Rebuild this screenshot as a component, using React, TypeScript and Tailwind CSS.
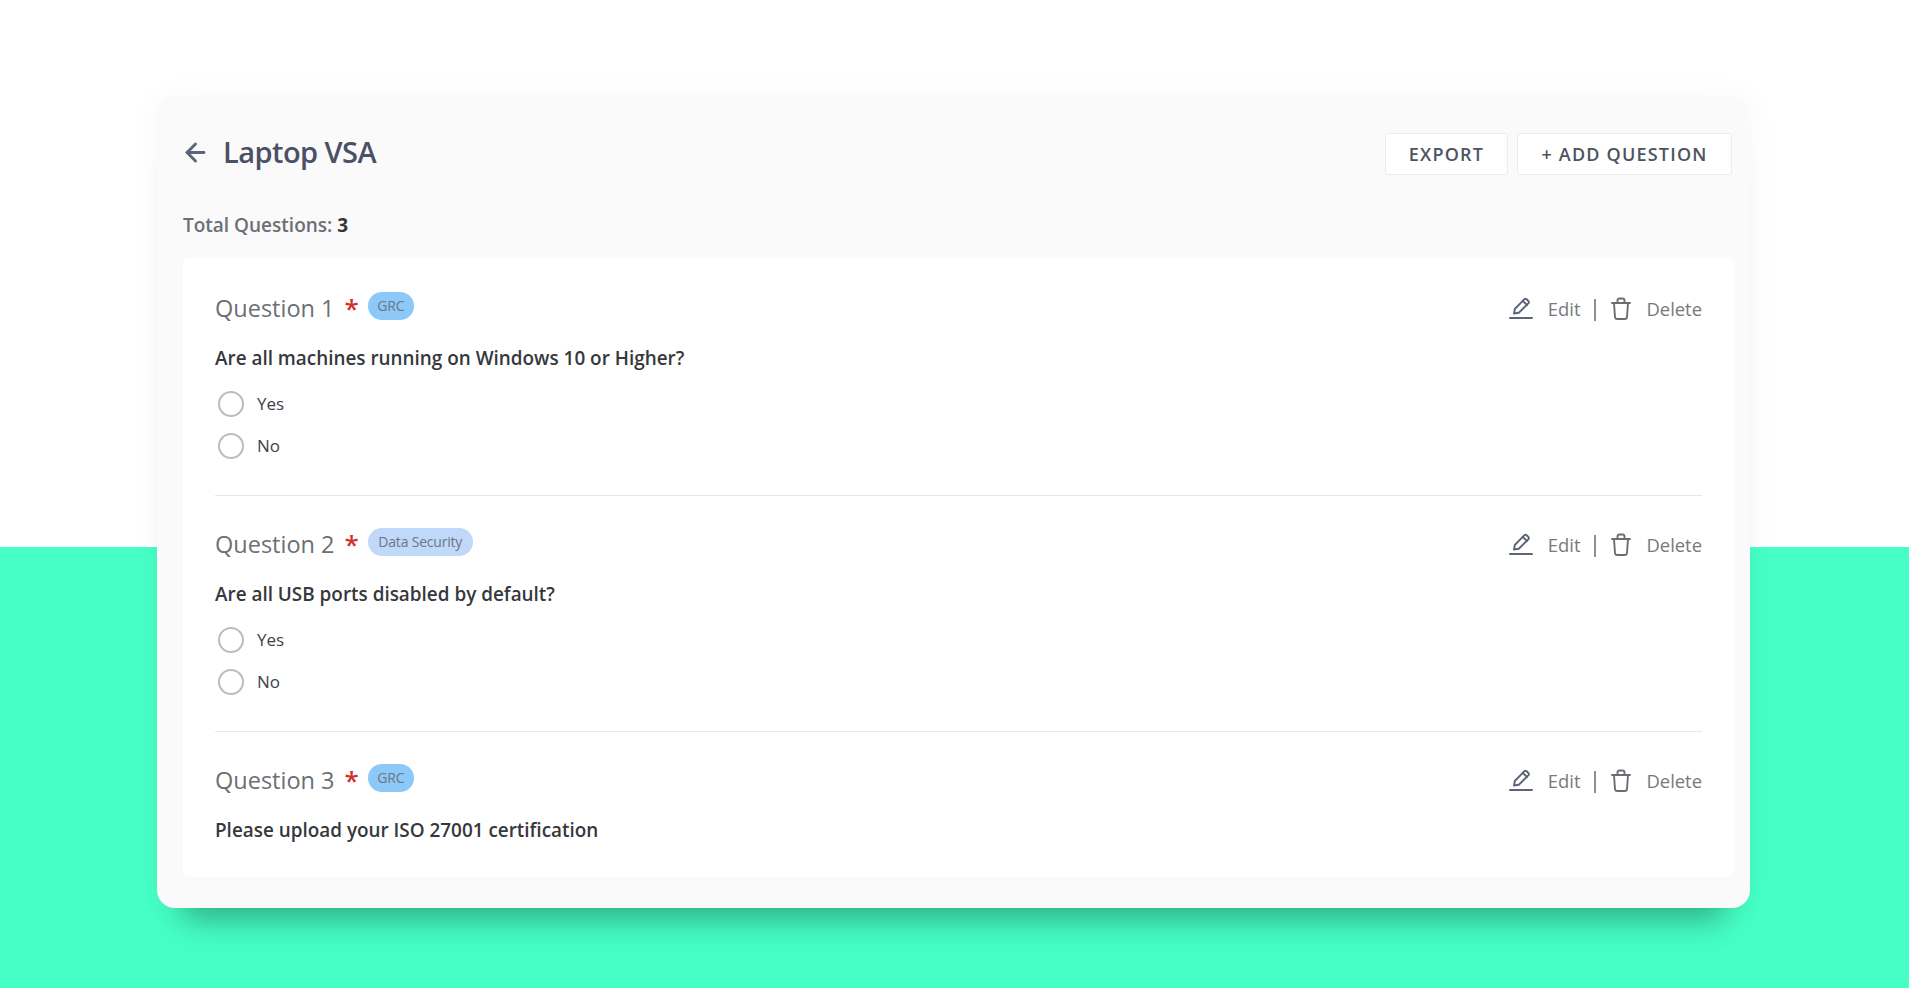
import { ArrowLeft } from "lucide-react";

type Question = {
  id: number;
  tag: string;
  tagClass: string;
  text: string;
  options: string[];
};

const questions: Question[] = [
  {
    id: 1,
    tag: "GRC",
    tagClass: "bg-[#8cc8f8] w-[46px]",
    text: "Are all machines running on Windows 10 or Higher?",
    options: ["Yes", "No"],
  },
  {
    id: 2,
    tag: "Data Security",
    tagClass: "bg-[#c0d8fa] w-[105px]",
    text: "Are all USB ports disabled by default?",
    options: ["Yes", "No"],
  },
  {
    id: 3,
    tag: "GRC",
    tagClass: "bg-[#8cc8f8] w-[46px]",
    text: "Please upload your ISO 27001 certification",
    options: [],
  },
];

function EditIcon() {
  return (
    <svg width="24" height="24" viewBox="0 0 24 24" fill="none" stroke="#5d6478" strokeWidth="1.9" strokeLinejoin="round" strokeLinecap="round">
      <path d="M5 17.5 L5.8 13 L15.2 3.4 Q16.4 2.3 17.6 3.3 L19.4 5 Q20.4 6.2 19.3 7.4 L9.8 16.8 Z" />
      <path d="M13.8 5 L18 9" />
      <path d="M1 22 H23" strokeWidth="2" />
    </svg>
  );
}

function TrashIcon() {
  return (
    <svg width="20" height="24" viewBox="0 0 20 24" fill="none" stroke="#6a6d72" strokeWidth="1.9" strokeLinejoin="round" strokeLinecap="round">
      <path d="M1 6 H19" />
      <path d="M6.5 6 V3.5 Q6.5 1.5 8.5 1.5 H11.5 Q13.5 1.5 13.5 3.5 V6" />
      <path d="M3 6 L4 20 Q4.2 22 6.2 22 H13.8 Q15.8 22 16 20 L17 6" />
    </svg>
  );
}

function QuestionBlock({ question, last }: { question: Question; last: boolean }) {
  return (
    <section className={last ? "pt-[33px] pb-[35px]" : "pt-[33px] pb-[36px] border-b border-[#e6e7e9]"}>
      <div className="flex h-[32px] items-center justify-between">
        <div className="flex items-center">
          <span className="text-[23.5px] text-[#6c6f73]">Question {question.id}</span>
          <span className="ml-[10px] -mt-[2px] text-[26px] leading-none font-semibold text-[#d0312d]">*</span>
          <span
            className={`ml-[9px] -mt-[6px] flex h-[28px] items-center justify-center rounded-full text-[14px] tracking-[-0.2px] text-[#6b7686] ${question.tagClass}`}
          >
            {question.tag}
          </span>
        </div>
        <div className="flex items-center text-[18.4px] text-[#76797d]">
          <EditIcon />
          <span className="ml-[15px]">Edit</span>
          <span className="mt-[3px] mr-[15px] ml-[14px] h-[22px] w-[2px] bg-[#8c8f93]" />
          <div className="mt-[1px]">
            <TrashIcon />
          </div>
          <span className="ml-[15px]">Delete</span>
        </div>
      </div>
      <p className="mt-[21px] text-[18.9px] leading-[24px] font-semibold text-[#35383c]">{question.text}</p>
      {question.options.length > 0 && (
        <div className="mt-[21px] flex flex-col gap-[16px] pl-[3px]">
          {question.options.map((option) => (
            <label key={option} className="flex h-[26px] items-center gap-[13px] text-[17px] text-[#3f4246]">
              <span className="h-[26px] w-[26px] rounded-full border-2 border-[#bcbcbc]" />
              {option}
            </label>
          ))}
        </div>
      )}
    </section>
  );
}

export default function App() {
  return (
    <div className="relative h-[988px] overflow-hidden bg-white font-['Open_Sans',sans-serif]">
      <div className="absolute inset-x-0 bottom-0 top-[547px] bg-[#46ffc6]" />

      <div className="relative mt-[97px] mr-[159px] ml-[157px] h-[811px] rounded-[18px] bg-[#fafafb] pt-[34px] pr-[16px] pl-[26px] shadow-[0_38px_30px_-26px_rgba(0,0,0,0.3),0_0_34px_rgba(0,0,0,0.035)]">
        <div className="flex h-[42px] items-center justify-between pr-[2px]">
          <div className="flex items-center">
            <ArrowLeft size={29} strokeWidth={2.4} className="-ml-[2px] text-[#5d6478]" />
            <h1 className="ml-[13px] text-[29px] font-semibold tracking-[-0.55px] text-[#4a5066]">Laptop VSA</h1>
          </div>
          <div className="mt-[4px] flex gap-[9px]">
            <button className="h-[42px] w-[123px] rounded-[3px] border border-[#ececee] bg-white text-[18px] font-semibold tracking-[1.2px] text-[#4d5360]">
              EXPORT
            </button>
            <button className="h-[42px] w-[215px] rounded-[3px] border border-[#ececee] bg-white text-[18px] font-semibold tracking-[1.2px] text-[#4d5360]">
              + ADD QUESTION
            </button>
          </div>
        </div>

        <p className="mt-[40px] text-[19px] leading-[24px] font-semibold text-[#6c6f73]">
          Total Questions: <span className="font-bold text-[#33363a]">3</span>
        </p>

        <div className="mt-[21px] rounded-[6px] bg-white px-[32px] pt-[1.5px]">
          {questions.map((question, index) => (
            <QuestionBlock key={question.id} question={question} last={index === questions.length - 1} />
          ))}
        </div>
      </div>
    </div>
  );
}
